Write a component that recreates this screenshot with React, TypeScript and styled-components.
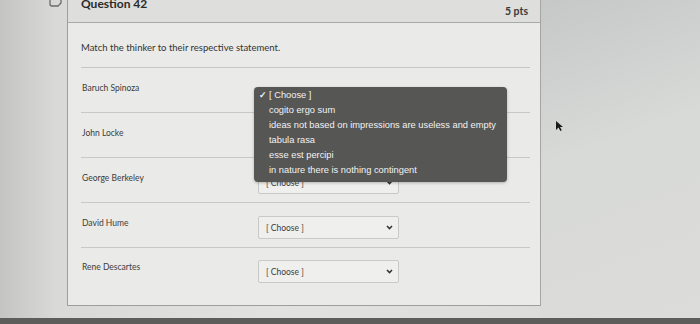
import React from "react";
import styled, { createGlobalStyle } from "styled-components";

const GlobalStyle = createGlobalStyle`
  html, body {
    margin: 0;
    padding: 0;
    width: 700px;
    height: 324px;
    overflow: hidden;
  }
  body {
    font-family: Lato, "Noto Sans", sans-serif;
    background: #d6d6d4;
  }
`;

const thinkers = [
  "Baruch Spinoza",
  "John Locke",
  "George Berkeley",
  "David Hume",
  "Rene Descartes"
];

const options = [
  "[ Choose ]",
  "cogito ergo sum",
  "ideas not based on impressions are useless and empty",
  "tabula rasa",
  "esse est percipi",
  "in nature there is nothing contingent"
];

const App: React.FC = () => {
  return (
    <>
      <GlobalStyle />
      <Page>
        <Main>
          <Gutter>
            <BookmarkIcon width="14" height="14" viewBox="0 0 14 14">
              <path
                d="M1 0 V10 Q1 12 3 12 H9 L12 9 V0"
                fill="none"
                stroke="#6b6b6b"
                strokeWidth="1.3"
              />
            </BookmarkIcon>
          </Gutter>
          <Card>
            <Header>
              <Title>Question 42</Title>
              <Points>5 pts</Points>
            </Header>
            <Body>
              <Prompt>Match the thinker to their respective statement.</Prompt>
              <List>
                {thinkers.map((name, i) => (
                  <Row key={name} $last={i === thinkers.length - 1}>
                    <Label>{name}</Label>
                    {/* the first select is open: the native menu covers it */}
                    <Select $open={i === 0}>
                      <span>[ Choose ]</span>
                      <Chevron width="7" height="5" viewBox="0 0 7 5">
                        <path
                          d="M1 1 L3.5 3.6 L6 1"
                          fill="none"
                          stroke="#333"
                          strokeWidth="1.5"
                        />
                      </Chevron>
                    </Select>
                  </Row>
                ))}
              </List>
            </Body>
            <Menu>
              {options.map((o, i) => (
                <MenuItem key={o}>
                  <Check>{i === 0 ? "✓" : ""}</Check>
                  {o}
                </MenuItem>
              ))}
            </Menu>
          </Card>
          <RightArea>
            <Cursor width="9" height="12" viewBox="0 0 9 12">
              <path d="M1 1 L1 10 L3.5 7.6 L5.4 11 L6.8 10.3 L5 7 L8 7 Z" fill="#1a1a1a" />
            </Cursor>
          </RightArea>
        </Main>
        <BottomBar />
      </Page>
    </>
  );
};

const Page = styled.div`
  width: 700px;
  height: 324px;
  display: flex;
  flex-direction: column;
  background: linear-gradient(90deg, #c4c4c3 0%, #d9d9d7 8%, #e2e2e0 40%, #dcdddb 80%, #cdd0cf 100%);
`;

const Main = styled.div`
  flex: 1;
  display: flex;
`;

const Gutter = styled.div`
  width: 67px;
  padding-left: 49px;
  box-sizing: border-box;
`;

const BookmarkIcon = styled.svg`
  display: block;
  margin-top: -6px;
`;

const Card = styled.div`
  position: relative;
  width: 474px;
  height: 306px;
  box-sizing: border-box;
  border-left: 1px solid #9e9e9c;
  border-right: 1px solid #a5a5a3;
  border-bottom: 1px solid #9e9e9c;
  background: #eaeae8;
  display: flex;
  flex-direction: column;
`;

const Header = styled.div`
  height: 23px;
  box-sizing: border-box;
  border-bottom: 1px solid #a9a9a7;
  background: #dededc;
  display: flex;
  justify-content: space-between;
  align-items: flex-start;
  padding: 0 12px 0 13px;
`;

const Title = styled.div`
  font-size: 12px;
  font-weight: 700;
  color: #2a2a2a;
  margin-top: -4px;
`;

const Points = styled.div`
  font-size: 10.5px;
  font-weight: 700;
  color: #3a3a3a;
  margin-top: 5px;
`;

const Body = styled.div`
  padding: 0 10px 0 13px;
  display: flex;
  flex-direction: column;
`;

const Prompt = styled.div`
  font-size: 9.5px;
  color: #333;
  height: 45px;
  box-sizing: border-box;
  padding-top: 19px;
  border-bottom: 1px solid #c6c6c4;
`;

const List = styled.div`
  display: flex;
  flex-direction: column;
`;

const Row = styled.div<{ $last?: boolean }>`
  height: 45px;
  box-sizing: border-box;
  display: flex;
  align-items: flex-start;
  padding-top: ${p => (p.$last ? "12px" : "13px")};
  border-bottom: ${p => (p.$last ? "none" : "1px solid #c8c8c6")};
`;

const Label = styled.div`
  width: 176px;
  flex-shrink: 0;
  font-size: 8.5px;
  color: #3c3c3c;
  padding-top: 2px;
  padding-left: 1px;
`;

const Select = styled.div<{ $open?: boolean }>`
  width: 141px;
  height: 23px;
  box-sizing: border-box;
  border: 1px solid #c9c9c7;
  border-radius: 2px;
  background: #efefed;
  display: flex;
  align-items: center;
  justify-content: space-between;
  padding: 0 5px 0 7px;
  font-size: 8.5px;
  color: #3c3c3c;
  visibility: ${p => (p.$open ? "hidden" : "visible")};
`;

const Chevron = styled.svg`
  display: block;
`;

const Menu = styled.div`
  position: absolute;
  left: 186px;
  top: 87px;
  width: 253px;
  height: 95px;
  box-sizing: border-box;
  padding: 1px 0 0 5px;
  background: #565655;
  border-radius: 4px;
  box-shadow: 0 1px 3px rgba(0, 0, 0, 0.25);
  font-family: "Liberation Sans", Arial, sans-serif;
  font-size: 9.3px;
  color: #f2f2f2;
  display: flex;
  flex-direction: column;
`;

const MenuItem = styled.div`
  height: 15px;
  line-height: 15px;
  display: flex;
  white-space: nowrap;
`;

const Check = styled.span`
  width: 10px;
  flex-shrink: 0;
  font-size: 9px;
  font-weight: 700;
`;

const RightArea = styled.div`
  flex: 1;
  position: relative;
  background: linear-gradient(160deg, #c5c8c7 0%, #d8dad8 45%, #dcdcda 100%);
`;

const Cursor = styled.svg`
  position: absolute;
  left: 14px;
  top: 120px;
`;

const BottomBar = styled.div`
  height: 6px;
  background: #5d5d5c;
`;

export default App;
